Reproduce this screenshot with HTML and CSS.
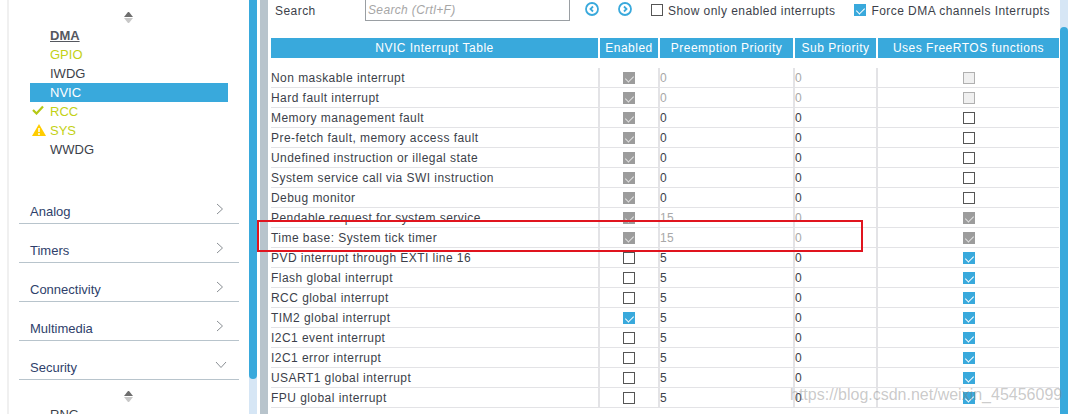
FILE: index.html
```html
<!DOCTYPE html>
<html lang="en">
<head>
  <meta charset="UTF-8" />
  <meta name="viewport" content="width=device-width, initial-scale=1.0" />
  <title>NVIC Configuration</title>
  <link rel="stylesheet" href="styles.css">
</head>
<body>
  <div class="app">
    <div class="edge"></div>

    <aside class="nav">
      <div class="scroll-arrows"><span class="up"></span><span class="down"></span></div>
      <ul class="periph">
        <li class="current">DMA</li>
        <li class="ok">GPIO</li>
        <li>IWDG</li>
        <li class="selected">NVIC</li>
        <li class="ok">
          <svg class="mark" width="12" height="10" viewBox="0 0 12 10"><path d="M1 5l3.500 3.500L11 1.500" fill="none" stroke="#b5c814" stroke-width="2.200"/></svg>
          RCC
        </li>
        <li class="ok">
          <svg class="mark" width="14" height="12" viewBox="0 0 14 12"><path d="M7 0L14 12H0z" fill="#ffcc00"/><path d="M7 4v4M7 9v2" stroke="#fff" stroke-width="1.500"/></svg>
          SYS
        </li>
        <li>WWDG</li>
      </ul>

      <div class="sections">
        <div class="section">Analog <svg class="chev" width="8" height="12" viewBox="0 0 8 12"><path d="M1 1l5.500 5L1 11" fill="none" stroke="#8a8f94"/></svg></div>
        <div class="section">Timers <svg class="chev" width="8" height="12" viewBox="0 0 8 12"><path d="M1 1l5.500 5L1 11" fill="none" stroke="#8a8f94"/></svg></div>
        <div class="section">Connectivity <svg class="chev" width="8" height="12" viewBox="0 0 8 12"><path d="M1 1l5.500 5L1 11" fill="none" stroke="#8a8f94"/></svg></div>
        <div class="section">Multimedia <svg class="chev" width="8" height="12" viewBox="0 0 8 12"><path d="M1 1l5.500 5L1 11" fill="none" stroke="#8a8f94"/></svg></div>
        <div class="section">Security <svg class="chev open" width="12" height="8" viewBox="0 0 12 8"><path d="M1 1l5 5.500L11 1" fill="none" stroke="#8a8f94"/></svg></div>
      </div>

      <div class="scroll-arrows second"><span class="up"></span><span class="down"></span></div>
      <ul class="periph"><li>RNG</li></ul>
    </aside>

    <div class="track"><div class="thumb"></div></div>
    <div class="divider"></div>

    <main class="main">
      <div class="toolbar">
        <span class="search-label">Search</span>
        <div class="search-box">Search (Crtl+F)</div>
        <svg class="nav-btn first" width="14" height="14" viewBox="0 0 14 14"><circle cx="7" cy="7" r="6" fill="none" stroke="#39a9dc" stroke-width="1.800"/><path d="M8 4.500L5.500 7 8 9.500" fill="none" stroke="#39a9dc" stroke-width="1.800"/></svg>
        <svg class="nav-btn" width="14" height="14" viewBox="0 0 14 14"><circle cx="7" cy="7" r="6" fill="none" stroke="#39a9dc" stroke-width="1.800"/><path d="M6 4.500L8.500 7 6 9.500" fill="none" stroke="#39a9dc" stroke-width="1.800"/></svg>
        <label class="opt first"><span class="cb"></span>Show only enabled interrupts</label>
        <label class="opt"><span class="cb on"></span>Force DMA channels Interrupts</label>
      </div>

      <div class="table">
        <div class="head">
          <div>NVIC Interrupt Table</div>
          <div>Enabled</div>
          <div>Preemption Priority</div>
          <div>Sub Priority</div>
          <div>Uses FreeRTOS functions</div>
        </div>

        <div class="row"><div>Non maskable interrupt</div><div class="c"><span class="cb lock"></span></div><div class="dim">0</div><div class="dim">0</div><div class="c"><span class="cb off"></span></div></div>
        <div class="row"><div>Hard fault interrupt</div><div class="c"><span class="cb lock"></span></div><div class="dim">0</div><div class="dim">0</div><div class="c"><span class="cb off"></span></div></div>
        <div class="row"><div>Memory management fault</div><div class="c"><span class="cb lock"></span></div><div>0</div><div>0</div><div class="c"><span class="cb"></span></div></div>
        <div class="row"><div>Pre-fetch fault, memory access fault</div><div class="c"><span class="cb lock"></span></div><div>0</div><div>0</div><div class="c"><span class="cb"></span></div></div>
        <div class="row"><div>Undefined instruction or illegal state</div><div class="c"><span class="cb lock"></span></div><div>0</div><div>0</div><div class="c"><span class="cb"></span></div></div>
        <div class="row"><div>System service call via SWI instruction</div><div class="c"><span class="cb lock"></span></div><div>0</div><div>0</div><div class="c"><span class="cb"></span></div></div>
        <div class="row"><div>Debug monitor</div><div class="c"><span class="cb lock"></span></div><div>0</div><div>0</div><div class="c"><span class="cb"></span></div></div>
        <div class="row"><div>Pendable request for system service</div><div class="c"><span class="cb lock"></span></div><div class="dim">15</div><div class="dim">0</div><div class="c"><span class="cb lock"></span></div></div>
        <div class="row"><div>Time base: System tick timer</div><div class="c"><span class="cb lock"></span></div><div class="dim">15</div><div class="dim">0</div><div class="c"><span class="cb lock"></span></div></div>
        <div class="row"><div>PVD interrupt through EXTI line 16</div><div class="c"><span class="cb"></span></div><div>5</div><div>0</div><div class="c"><span class="cb on"></span></div></div>
        <div class="row"><div>Flash global interrupt</div><div class="c"><span class="cb"></span></div><div>5</div><div>0</div><div class="c"><span class="cb on"></span></div></div>
        <div class="row"><div>RCC global interrupt</div><div class="c"><span class="cb"></span></div><div>5</div><div>0</div><div class="c"><span class="cb on"></span></div></div>
        <div class="row"><div>TIM2 global interrupt</div><div class="c"><span class="cb on"></span></div><div>5</div><div>0</div><div class="c"><span class="cb on"></span></div></div>
        <div class="row"><div>I2C1 event interrupt</div><div class="c"><span class="cb"></span></div><div>5</div><div>0</div><div class="c"><span class="cb on"></span></div></div>
        <div class="row"><div>I2C1 error interrupt</div><div class="c"><span class="cb"></span></div><div>5</div><div>0</div><div class="c"><span class="cb on"></span></div></div>
        <div class="row"><div>USART1 global interrupt</div><div class="c"><span class="cb"></span></div><div>5</div><div>0</div><div class="c"><span class="cb on"></span></div></div>
        <div class="row"><div>FPU global interrupt</div><div class="c"><span class="cb"></span></div><div>5</div><div>0</div><div class="c"><span class="cb on"></span></div></div>
      </div>
    </main>

    <div class="track right"><div class="thumb"></div></div>
    <div class="tail"></div>

    <div class="red-box"></div>
    <div class="watermark">https://blog.csdn.net/weixin_45456099</div>
  </div>
</body>
</html>
```

FILE: styles.css
```css
* {
  box-sizing: border-box;
}
html, body {
  margin: 0;
  height: 100%;
  overflow: hidden;
  background: white;
}
body {
  font-family: 'Liberation Sans', sans-serif;
  font-size: 12px;
  color: #3c3f4a;
}
.app {
  position: relative;
  display: flex;
  width: 1071px;
  height: 414px;
  overflow: hidden;
}
.edge {
  width: 9px;
  border-right: 2px solid #f0f0f0;
}

/* left navigation */
.nav {
  width: 240px;
  overflow: hidden;
  padding-top: 12px;
}
.scroll-arrows {
  width: 9px;
  margin-left: 115px;
  display: flex;
  flex-direction: column;
  gap: 1px;
}
.scroll-arrows .up {
  border: 4px solid transparent;
  border-top: 0;
  border-bottom: 5px solid #6e6e6e;
}
.scroll-arrows .down {
  border: 4px solid transparent;
  border-bottom: 0;
  border-top: 5px solid #c8c8c8;
}
.scroll-arrows.second {
  margin-top: 11px;
}
.periph {
  list-style: none;
  margin: 3px 0 0 21px;
  padding: 0;
  width: 198px;
}
.periph li {
  position: relative;
  height: 19px;
  line-height: 19px;
  padding-left: 20px;
  font-size: 13px;
}
.periph .current {
  font-weight: 700;
  text-decoration: underline;
  color: #55585f;
}
.periph .ok {
  color: #c3d116;
}
.periph .selected {
  background: #39a9dc;
  color: white;
}
.mark {
  position: absolute;
  left: 2px;
  top: 3px;
}
.sections {
  margin: 26px 0 0 10px;
  width: 220px;
}
.section {
  display: flex;
  align-items: center;
  justify-content: space-between;
  height: 39px;
  padding: 14px 15px 0 11px;
  border-bottom: 1px solid #b8c4cc;
  font-size: 13px;
  color: #2f3f6b;
}
.chev {
  margin-top: -4px;
}
.chev.open {
  margin-right: -3px;
}

/* scrollbars */
.track {
  width: 8px;
  height: 414px;
  background: #d6e6f5;
}
.thumb {
  height: 379px;
  background: #39a9dc;
  border-radius: 0 0 4px 4px;
}
.track.right {
  margin-left: 1px;
}
.track.right .thumb {
  height: 387px;
  margin-top: 27px;
  border-radius: 4px 4px 0 0;
}
.divider {
  width: 8px;
  margin-left: 3px;
  background: #b8c4cc;
}
.tail {
  width: 3px;
}

/* right panel */
.main {
  flex: 1;
  padding-left: 3px;
  min-width: 0;
}
.toolbar {
  display: flex;
  align-items: center;
  height: 21px;
  font-size: 12px;
  letter-spacing: 0.45px;
}
.search-label {
  width: 94px;
  padding-left: 4px;
}
.search-box {
  width: 205px;
  height: 21px;
  border: 1px solid #9a9fa3;
  border-top: 0;
  padding-left: 2px;
  line-height: 20px;
  font-style: italic;
  letter-spacing: 0.35px;
  color: #a6a6a6;
}
.nav-btn {
  margin-left: 19px;
  margin-top: -3px;
}
.nav-btn.first {
  margin-left: 15px;
}
.opt {
  display: flex;
  align-items: center;
  gap: 5px;
  margin-left: 19px;
}
.opt .cb {
  margin-top: -2px;
}
.cb {
  position: relative;
  display: block;
  width: 12px;
  height: 12px;
  border: 1px solid #555;
  background: white;
}
.cb.on, .cb.lock {
  border: 0;
  background: #39a9dc;
}
.cb.lock {
  background: #9c9c9c;
}
.cb.off {
  border-color: #b0b0b0;
  background: #f0f0f0;
}
.cb.on::after, .cb.lock::after {
  content: "";
  position: absolute;
  left: 4px;
  top: 2px;
  width: 4px;
  height: 7px;
  border: solid white;
  border-width: 0 1.500px 1.500px 0;
  transform: rotate(45deg);
}
.cb.lock::after {
  border-color: #e4e4e4;
}

.table {
  width: 788px;
  margin-top: 17px;
}
.head, .row {
  display: grid;
  grid-template-columns: 329px 60px 135px 83px 181px;
}
.head {
  height: 19px;
  margin-bottom: 11px;
}
.head div {
  margin-right: 2px;
  background: #39a9dc;
  color: white;
  text-align: center;
  line-height: 20px;
  font-size: 12px;
  letter-spacing: 0.5px;
}
.head div:last-child {
  margin-right: 0;
}
.row {
  height: 20px;
  border-bottom: 1px solid #e3e3e6;
  font-size: 12px;
  letter-spacing: 0.45px;
  color: #3c3f4a;
}
.row div {
  line-height: 20px;
  border-right: 2px solid #e3e3e6;
}
.row div:last-child {
  border-right: 0;
}
.row .c {
  display: flex;
  align-items: center;
  justify-content: center;
  padding-bottom: 1px;
}
.row .dim {
  color: #a8a8a8;
}

/* things drawn over the screenshot */
.red-box {
  position: absolute;
  left: 257px;
  top: 220px;
  width: 606px;
  height: 32px;
  border: 2px solid #e0141e;
}
.watermark {
  position: absolute;
  left: 790px;
  top: 386px;
  font-size: 16px;
  color: rgba(120, 120, 120, 0.4);
  white-space: nowrap;
}
```
